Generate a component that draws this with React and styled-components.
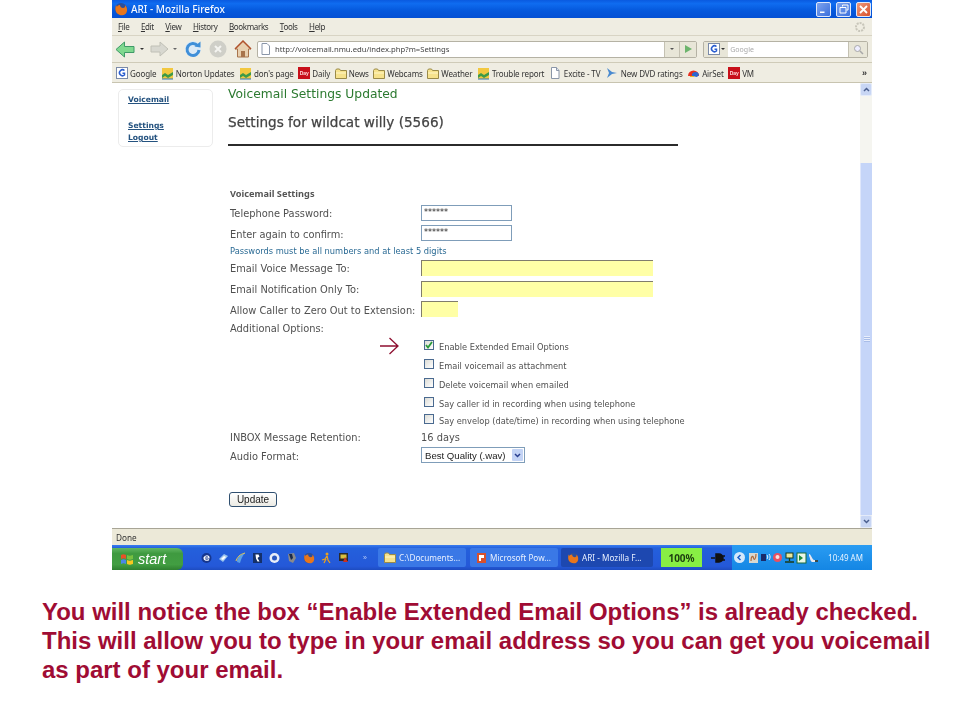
import React from 'react'
import styled, { createGlobalStyle } from 'styled-components'

const GlobalStyle = createGlobalStyle`
  html, body {
    margin: 0;
    padding: 0;
    background: #fff;
  }
`

const Page = styled.div`
  width: 960px;
  height: 720px;
  overflow: hidden;
  background: #fff;
`
const Shot = styled.div`
  width: 760px;
  height: 570px;
  margin-left: 112px;
  display: flex;
  flex-direction: column;
  filter: blur(0.35px);
`

/* title bar */
const TitleBar = styled.div`
  height: 18px;
  display: flex;
  align-items: center;
  padding: 0 1px 0 2px;
  gap: 3px;
  background: linear-gradient(180deg, #0a5ae0 0%, #0f6cf0 20%, #0558dc 60%, #0450d4 100%);
`
const TitleText = styled.span`
  flex: 1;
  font: 500 10px "Noto Sans", "Liberation Sans", sans-serif;
  color: #f4f8ff;
`
const WinButton = styled.div`
  width: 15px;
  height: 15px;
  margin-left: 2px;
  border-radius: 2px;
  border: 1px solid #dfe8fa;
  box-sizing: border-box;
  display: flex;
  align-items: center;
  justify-content: center;
  background: ${p => p.$close
    ? 'linear-gradient(135deg, #ee9a7c, #d8512c)'
    : 'linear-gradient(135deg, #7ea4ee, #3b6fdc)'};
`

/* menu */
const MenuBar = styled.div`
  height: 18px;
  display: flex;
  align-items: center;
  padding: 0 6px;
  gap: 11.5px;
  background: #efede2;
  border-bottom: 1px solid #d8d4c4;
  box-sizing: border-box;
`
const MenuItem = styled.span`
  font: 8px "Noto Sans", "Liberation Sans", sans-serif;
  letter-spacing: -0.35px;
  color: #333;
  &::first-letter {
    text-decoration: underline;
  }
`

/* navigation */
const NavBar = styled.div`
  height: 27px;
  display: flex;
  align-items: center;
  padding-left: 3px;
  padding-right: 4px;
  background: #efede2;
  border-bottom: 1px solid #cfcbb8;
  box-sizing: border-box;
`
const NavIcon = styled.div`
  display: flex;
  margin-right: ${p => p.$gap}px;
`
const Caret = styled.div`
  width: 0;
  height: 0;
  border-left: 2px solid transparent;
  border-right: 2px solid transparent;
  border-top: 2px solid ${p => p.$color || '#333'};
  margin-right: ${p => p.$gap || 0}px;
`
const UrlBar = styled.div`
  width: 441px;
  height: 17px;
  display: flex;
  align-items: center;
  background: #fff;
  border: 1px solid #b5b2a4;
  border-radius: 2px;
  box-sizing: border-box;
  margin-right: 6px;
`
const UrlText = styled.span`
  flex: 1;
  margin-left: 4px;
  font: 7.7px "Noto Sans", "Liberation Sans", sans-serif;
  color: #444;
`
const UrlCell = styled.div`
  width: ${p => p.$w}px;
  height: 100%;
  background: #e8e6d8;
  border-left: 1px solid #c4c1b2;
  box-sizing: border-box;
  display: flex;
  align-items: center;
  justify-content: center;
`
const SearchBar = styled(UrlBar)`
  width: 165px;
  margin-right: 0;
`
const SearchEngine = styled.div`
  width: 24px;
  height: 100%;
  background: #e8e6d8;
  display: flex;
  align-items: center;
  justify-content: center;
  gap: 1px;
`
const SearchText = styled.span`
  flex: 1;
  margin-left: 2px;
  font: 7px "Noto Sans", "Liberation Sans", sans-serif;
  color: #aaa;
`

/* bookmarks */
const Bookmarks = styled.div`
  height: 20px;
  display: flex;
  align-items: center;
  padding: 1px 5px 0 4px;
  gap: 4.5px;
  background: #efede2;
  border-bottom: 1px solid #c8c4b0;
  box-sizing: border-box;
`
const Bookmark = styled.div`
  display: flex;
  align-items: center;
  gap: 2px;
  font: 8px "Noto Sans", "Liberation Sans", sans-serif;
  letter-spacing: -0.12px;
  color: #333;
  white-space: nowrap;
`
const More = styled.span`
  margin-left: auto;
  font: bold 9px "Liberation Sans", sans-serif;
  color: #333;
`
const DayBox = styled.span`
  width: 12px;
  height: 12px;
  background: #c8101a;
  color: #ffd9d9;
  font: bold 5px "Liberation Sans", sans-serif;
  display: flex;
  align-items: center;
  justify-content: center;
`

/* content */
const Viewport = styled.div`
  height: 445px;
  display: flex;
  background: #fff;
`
const Content = styled.div`
  flex: 1;
  display: flex;
  min-width: 0;
`
const Sidebar = styled.nav`
  width: 95px;
  height: 58px;
  margin: 6px 15px 0 6px;
  padding: 4px 9px;
  box-sizing: border-box;
  border: 1px solid #ececec;
  border-radius: 5px;
  display: flex;
  flex-direction: column;
  flex-shrink: 0;
`
const SideLink = styled.a`
  font: bold 7.6px/12px "DejaVu Sans", Verdana, sans-serif;
  color: #24527f;
  text-decoration: underline;
  margin-bottom: ${p => p.$gap || 0}px;
`
const Main = styled.div`
  flex: 1;
  min-width: 0;
`
const Updated = styled.div`
  height: 20px;
  margin-top: 1px;
  font: 12.3px/20px "DejaVu Sans", Verdana, sans-serif;
  color: #2c7a30;
`
const Heading = styled.h2`
  margin: 9px 0 0;
  font: normal 13.6px/18px "DejaVu Sans", Verdana, sans-serif;
  -webkit-text-stroke: 0.25px #444;
  color: #444;
`
const Rule = styled.hr`
  width: 450px;
  height: 2px;
  margin: 13px 0 0;
  border: 0;
  background: #2b2b2b;
`
const Form = styled.div`
  margin: 38px 0 0 2px;
`
const Row = styled.div`
  height: ${p => p.$h}px;
  display: grid;
  grid-template-columns: 191px 1fr;
  align-items: center;
`
const Label = styled.span`
  padding-top: 2px;
  font: 9.85px "DejaVu Sans", Verdana, sans-serif;
  color: #505050;
  white-space: nowrap;
`
const SectionTitle = styled.span`
  font: 700 9.2px "Noto Sans", "Liberation Sans", sans-serif;
  color: #555;
  white-space: nowrap;
`
const Note = styled.span`
  font: 8.3px "DejaVu Sans", Verdana, sans-serif;
  color: #2a6a94;
  white-space: nowrap;
`
const PassInput = styled.div`
  width: 91px;
  height: 16px;
  box-sizing: border-box;
  border: 1px solid #7f9db9;
  padding-left: 2px;
  font: 8px/14px "DejaVu Sans", sans-serif;
  color: #222;
`
const YellowInput = styled.div`
  width: ${p => p.$w}px;
  height: 16px;
  box-sizing: border-box;
  background: #ffffa6;
  border-top: 1px solid #807c6c;
  border-left: 1px solid #807c6c;
`
const ArrowCell = styled.div`
  display: flex;
  justify-content: flex-end;
  padding-right: 22px;
`
const CheckLine = styled.div`
  display: flex;
  align-items: center;
  gap: 5px;
  padding: 2px 0 0 3px;
  font: 8.25px "DejaVu Sans", Verdana, sans-serif;
  color: #505050;
  white-space: nowrap;
`
const CheckBox = styled.span`
  width: 10px;
  height: 10px;
  box-sizing: border-box;
  border: 1px solid #4a6a90;
  background: linear-gradient(135deg, #dcdcd6, #fff);
  display: flex;
  align-items: center;
  justify-content: center;
  margin-top: -4px;
`
const Select = styled.div`
  width: 104px;
  height: 16px;
  box-sizing: border-box;
  border: 1px solid #7f9db9;
  display: flex;
  align-items: center;
  justify-content: space-between;
  padding: 0 1px 0 3px;
  font: 9.6px "Liberation Sans", Arial, sans-serif;
  color: #222;
`
const SelectArrow = styled.span`
  width: 11px;
  height: 12px;
  background: #c3d3f5;
  border-radius: 1px;
  display: flex;
  align-items: center;
  justify-content: center;
`
const Update = styled.button`
  display: block;
  width: 48px;
  height: 15px;
  margin: 27px 0 0 -1px;
  padding: 0;
  background: linear-gradient(180deg, #fff, #ecebe4);
  border: 1px solid #2f4f6f;
  border-radius: 3px;
  font: 10px "Liberation Sans", Arial, sans-serif;
  color: #222;
`

/* scrollbar */
const Scrollbar = styled.div`
  width: 12px;
  display: flex;
  flex-direction: column;
  background: #f5f5f0;
`
const ScrollButton = styled.div`
  height: 13px;
  background: #c8d6f4;
  border: 1px solid #e4ebfa;
  box-sizing: border-box;
  border-radius: 2px;
  display: flex;
  align-items: center;
  justify-content: center;
`
const ScrollGap = styled.div`
  height: 67px;
`
const ScrollThumb = styled.div`
  flex: 1;
  background: #c5d5f8;
  border-left: 1px solid #dfe7fb;
  display: flex;
  align-items: center;
  justify-content: center;
`
const Grip = styled.div`
  width: 6px;
  height: 6px;
  background: repeating-linear-gradient(180deg, #e8eefc 0 1px, #a9bde8 1px 2px);
`

/* status + taskbar */
const StatusBar = styled.div`
  height: 17px;
  display: flex;
  align-items: center;
  padding-left: 4px;
  background: #ece9d8;
  border-top: 1px solid #a8a596;
  box-sizing: border-box;
  font: 8.2px "Noto Sans", "Liberation Sans", sans-serif;
  color: #333;
`
const Taskbar = styled.div`
  height: 25px;
  display: flex;
  align-items: center;
  background: linear-gradient(180deg, #3a7df0 0%, #2460dc 12%, #2458d8 85%, #1e4cc0 100%);
`
const StartButton = styled.div`
  width: 71px;
  height: 22px;
  margin-top: 3px;
  display: flex;
  align-items: center;
  gap: 4px;
  padding-left: 8px;
  box-sizing: border-box;
  border-radius: 0 6px 6px 0;
  background: linear-gradient(180deg, #62b662 0%, #3f9a40 25%, #429e42 75%, #2f8030 100%);
  font: italic 500 14.5px "Liberation Sans", Arial, sans-serif;
  color: #fff;
`
const QuickLaunch = styled.div`
  display: flex;
  align-items: center;
  gap: 6px;
  margin-left: 18px;
  width: 177px;
  flex-shrink: 0;
`
const QuickMore = styled.span`
  margin-left: 8px;
  font: 7px "Liberation Sans", sans-serif;
  color: #b8ccf8;
`
const Task = styled.div`
  width: ${p => p.$w}px;
  height: 19px;
  margin-right: ${p => p.$gap}px;
  display: flex;
  align-items: center;
  gap: 3px;
  padding-left: 6px;
  box-sizing: border-box;
  border-radius: 2px;
  background: ${p => p.$active ? '#1d48b0' : '#3a78e6'};
  font: 8.2px "Noto Sans", "Liberation Sans", sans-serif;
  color: #e8f0ff;
  white-space: nowrap;
  overflow: hidden;
  flex-shrink: 0;
`
const Battery = styled.div`
  width: 41px;
  height: 19px;
  margin: 0 0 0 8px;
  display: flex;
  align-items: center;
  justify-content: center;
  background: #88ee44;
  font: bold 10px "Noto Sans", "Liberation Sans", sans-serif;
  color: #1d3d10;
  flex-shrink: 0;
`
const Plug = styled.div`
  display: flex;
  margin-left: 9px;
  margin-right: 7px;
`
const Tray = styled.div`
  flex: 1;
  height: 100%;
  display: flex;
  align-items: center;
  background: linear-gradient(180deg, #2a9cf2, #1486e4);
  padding-left: 2px;
  gap: 1px;
`
const TrayChevron = styled.div`
  width: 11px;
  height: 11px;
  border-radius: 50%;
  background: #d4e8fb;
  margin-right: 2px;
  display: flex;
  align-items: center;
  justify-content: center;
`
const Clock = styled.span`
  margin-left: auto;
  margin-right: 9px;
  font: 8px "Noto Sans", "Liberation Sans", sans-serif;
  color: #e8f4ff;
`

/* caption */
const Caption = styled.p`
  margin: 27px 0 0 42px;
  font: bold 23.97px/29px "Liberation Sans", Arial, sans-serif;
  color: #a00c34;
  white-space: nowrap;
`

/* drawings */
const Fox = ({ size = 13 }) => (
  <svg width={size} height={size} viewBox="0 0 14 14">
    <circle cx="7" cy="7" r="6" fill="#2c4f9c" />
    <path d="M2 3c-1 3-1 7 2 9s8 2 9-3c.5-3-1-5-2-6 .5 2-.5 3-2 3S6 5 6 3C4 3 3 4 3 5 2.500 4.500 2.500 3.500 2 3z" fill="#e8761c" />
  </svg>
)
const Folder = () => (
  <svg width="12" height="11" viewBox="0 0 12 11">
    <path d="M.5 2.500 1.500 1h3l1 1.500h6v8H.5z" fill="#f6e28c" stroke="#9a8a48" />
    <path d="M1 5h10" stroke="#fff6c8" />
  </svg>
)
const Sheet = () => (
  <svg width="13" height="12" viewBox="0 0 13 12">
    <path d="M2.500.5h5l2.500 3v8h-7.500z" fill="#fff" stroke="#8a96a8" />
    <path d="M7.500.5v3h2.500" fill="#dde4ee" stroke="#8a96a8" />
  </svg>
)
const Norton = () => (
  <svg width="13" height="13" viewBox="0 0 13 13">
    <rect x="1" y="1" width="11" height="11" fill="#f2c840" />
    <path d="M1 8 4 6l3 2 5-3v3l-5 3-3-2-3 2z" fill="#3c9a48" />
    <path d="M1 12h11" stroke="#2a78b8" />
  </svg>
)
const GoogleIcon = () => (
  <svg width="12" height="12" viewBox="0 0 12 12">
    <rect x=".5" y=".5" width="11" height="11" fill="#fff" stroke="#7a8aa8" />
    <path d="M8.500 3.500A3 3 0 1 0 8.500 8V6.200H6.500" fill="none" stroke="#2a5ed0" strokeWidth="1.500" />
  </svg>
)
const Globe = () => (
  <svg width="14" height="12" viewBox="0 0 14 12">
    <path d="M2 1 7 5 12 6 7 7 2 11 4 6z" fill="#4a8ad0" />
  </svg>
)
const AirSet = () => (
  <svg width="13" height="11" viewBox="0 0 13 11">
    <path d="M1 8a5.500 5.500 0 0 1 11 0z" fill="#e83020" />
    <path d="M5 8a3 3 0 0 1 7-1l-2 2z" fill="#2a68d0" />
    <path d="M3 8h4v1H3z" fill="#f0b820" />
  </svg>
)
const Back = () => (
  <svg width="20" height="17" viewBox="0 0 20 17">
    <path d="M1 8.500 9.500 1v4.500H19v6H9.500V16z" fill="#7fd88f" stroke="#3f9a68" />
  </svg>
)
const Forward = () => (
  <svg width="19" height="16" viewBox="0 0 19 16">
    <path d="M18 8 10 1v4H1v6h9v4z" fill="#d8d8d0" stroke="#c0c0b6" />
  </svg>
)
const Reload = () => (
  <svg width="18" height="18" viewBox="0 0 18 18">
    <circle cx="9" cy="9" r="8" fill="#dceaf6" />
    <path d="M13.500 5.500A6 6 0 1 0 15 10" fill="none" stroke="#3f8fd8" strokeWidth="3" />
    <path d="M10.500 6.500 16.500 1.500V7.500z" fill="#3f8fd8" />
  </svg>
)
const Stop = () => (
  <svg width="18" height="18" viewBox="0 0 18 18">
    <circle cx="9" cy="9" r="8.500" fill="#cfcfc8" />
    <path d="M6 6l6 6M12 6l-6 6" stroke="#f4f4f0" strokeWidth="2" />
  </svg>
)
const Home = () => (
  <svg width="18" height="18" viewBox="0 0 18 18">
    <path d="M9 1 1 9h2.500v8h11V9H17z" fill="#e8d0b0" stroke="#a8744c" />
    <path d="M1 9 9 1l8 8" fill="none" stroke="#b0522c" strokeWidth="1.500" />
    <rect x="7" y="11" width="4" height="6" fill="#a8744c" />
  </svg>
)
const Gear = () => (
  <svg width="12" height="12" viewBox="0 0 12 12" style={{ marginLeft: 'auto' }}>
    <circle cx="6" cy="6" r="4" fill="none" stroke="#c8c6ba" strokeWidth="2" strokeDasharray="2 1" />
  </svg>
)
const WinFlag = () => (
  <svg width="14" height="13" viewBox="0 0 14 13">
    <path d="M1 2c2-1 3-1 5 0v4C4 5 3 5 1 6z" fill="#e85028" />
    <path d="M7 2c2 1 3 1 6 0v4c-3 1-4 1-6 0z" fill="#78c040" />
    <path d="M1 7c2-1 3-1 5 0v4C4 10 3 10 1 11z" fill="#4a88e8" />
    <path d="M7 7c2 1 3 1 6 0v4c-3 1-4 1-6 0z" fill="#f8c820" />
  </svg>
)
const Chevron = ({ up, left, color = '#4a5f8f' }) => (
  <svg width="7" height="7" viewBox="0 0 7 7">
    <path
      d={left ? 'M4.500 1 2 3.500 4.500 6' : up ? 'M1 5l2.500-2.500L6 5' : 'M1 2l2.500 2.500L6 2'}
      fill="none"
      stroke={color}
      strokeWidth="1.500"
    />
  </svg>
)
const Tick = () => (
  <svg width="8" height="8" viewBox="0 0 8 8">
    <path d="M1 4l2 2.500L7 1" fill="none" stroke="#2a9a3a" strokeWidth="1.800" />
  </svg>
)
const RedArrow = () => (
  <svg width="19" height="18" viewBox="0 0 19 18">
    <path d="M0 9h18M9.500 1l8.500 8-8.500 8" fill="none" stroke="#8e0f30" strokeWidth="1.300" />
  </svg>
)

/* quick launch and tray glyphs, all 11x12 */
const Mini = ({ children }) => (
  <svg width="11" height="12" viewBox="0 0 11 12">{children}</svg>
)
const quickIcons = [
  <Mini><circle cx="5.500" cy="6" r="5" fill="#16368e" /><path d="M3 6c1-3 5-3 5 0H3c0 2 3 3 5 1.500" fill="none" stroke="#fff" strokeWidth="1.200" /></Mini>,
  <Mini><path d="M1 7l5-5 4 2-5 6z" fill="#9cc4ec" /><path d="M3 7l3-3 2 1-3 3z" fill="#fff" /></Mini>,
  <Mini><path d="M2 10C2 5 6 2 10 1 7 4 6 8 5 11z" fill="#5aa0e8" /><path d="M1 9c2-6 6-7 9-8" fill="none" stroke="#e8c850" /></Mini>,
  <Mini><rect x="1" y="1" width="9" height="10" fill="#14306a" /><path d="M3.500 2.500h3l1 2-2 1.500 2 3.500H5.500L4 6.500z" fill="#fff" /></Mini>,
  <Mini><circle cx="5.500" cy="6" r="5" fill="#e8eef8" /><circle cx="5.500" cy="6" r="2.500" fill="#2a58c0" /></Mini>,
  <Mini><path d="M2 2l6-1 2 5-3 5-4-2z" fill="#8a8a8a" /><path d="M3 2l3 0 1 4-2 2z" fill="#1a2a4a" /></Mini>,
  <Fox size={12} />,
  <Mini><circle cx="6" cy="2" r="1.500" fill="#e8a020" /><path d="M6 4 4 7 1 8M6 4l1 4 2 3M5 7l-2 4" stroke="#e8a020" strokeWidth="1.300" fill="none" /></Mini>,
  <Mini><rect x="1" y="1" width="9" height="8" fill="#2a2a2a" /><rect x="2.500" y="2.500" width="6" height="4" fill="#d8c040" /><path d="M7 5l3 5H5z" fill="#c83020" /></Mini>,
]
const trayIcons = [
  <Mini><rect x="1" y="1" width="9" height="10" fill="#d8d8d0" /><path d="M3 9c0-5 2-6 2.500-3S8 7 8 2" fill="none" stroke="#b06a3a" strokeWidth="1.200" /></Mini>,
  <Mini><rect x="1" y="2" width="5" height="7" fill="#1a2a6a" /><path d="M7 3c1 1 1 3 0 4M9 2c1.500 2 1.500 4 0 6" fill="none" stroke="#e8f0ff" /></Mini>,
  <Mini><circle cx="5.500" cy="5.500" r="4.500" fill="#e85060" /><circle cx="5.500" cy="5" r="2" fill="#f8e0e0" /></Mini>,
  <Mini><rect x="2" y="1" width="7" height="5" fill="#e8e8a0" stroke="#1a3a1a" /><path d="M5.500 6v3M1 10h9" stroke="#1a3a1a" strokeWidth="1.300" /></Mini>,
  <Mini><rect x="1" y="1" width="9" height="10" fill="#e8f8e8" stroke="#1a6a3a" /><path d="M3 3l4 3-4 3z" fill="#1a8a3a" /></Mini>,
  <Mini><path d="M1 2c2 0 3 5 5 6h4v2H4C2 9 2 5 1 4z" fill="#e8e8f0" /><path d="M7 8h3v2H7z" fill="#3a4a4a" /></Mini>,
]

const bookmarks = [
  [<GoogleIcon />, 'Google'],
  [<Norton />, 'Norton Updates'],
  [<Norton />, "don's page"],
  [<DayBox>Day</DayBox>, 'Daily'],
  [<Folder />, 'News'],
  [<Folder />, 'Webcams'],
  [<Folder />, 'Weather'],
  [<Norton />, 'Trouble report'],
  [<Sheet />, 'Excite - TV'],
  [<Globe />, 'New DVD ratings'],
  [<AirSet />, 'AirSet'],
  [<DayBox>Day</DayBox>, 'VM'],
]

const options = [
  ['Enable Extended Email Options', true, 19],
  ['Email voicemail as attachment', false, 19],
  ['Delete voicemail when emailed', false, 19],
  ['Say caller id in recording when using telephone', false, 19],
  ['Say envelop (date/time) in recording when using telephone', false, 16],
]

export default function App() {
  return (
    <Page>
      <GlobalStyle />
      <Shot>
        <TitleBar>
          <Fox size={14} />
          <TitleText>ARI - Mozilla Firefox</TitleText>
          <WinButton>
            <svg width="9" height="9" viewBox="0 0 9 9"><path d="M1 6.500h4.500v1.500H1z" fill="#fff" /></svg>
          </WinButton>
          <WinButton>
            <svg width="10" height="10" viewBox="0 0 10 10">
              <path d="M3.500 2.500V1h5.500v5H7.500M1 3.500h6v5.500H1z" fill="none" stroke="#fff" />
            </svg>
          </WinButton>
          <WinButton $close>
            <svg width="9" height="9" viewBox="0 0 9 9"><path d="M1 1l7 7M8 1 1 8" stroke="#fff" strokeWidth="1.800" /></svg>
          </WinButton>
        </TitleBar>

        <MenuBar>
          {['File', 'Edit', 'View', 'History', 'Bookmarks', 'Tools', 'Help'].map(m => (
            <MenuItem key={m}>{m}</MenuItem>
          ))}
          <Gear />
        </MenuBar>

        <NavBar>
          <NavIcon $gap={5}><Back /></NavIcon>
          <Caret $gap={6} />
          <NavIcon $gap={4}><Forward /></NavIcon>
          <Caret $gap={7} $color="#666" />
          <NavIcon $gap={7}><Reload /></NavIcon>
          <NavIcon $gap={7}><Stop /></NavIcon>
          <NavIcon $gap={5}><Home /></NavIcon>
          <UrlBar>
            <svg width="10" height="12" viewBox="0 0 10 12" style={{ marginLeft: 3 }}>
              <path d="M1 .5h5l2.500 2.500v8.500H1z" fill="#fff" stroke="#8a96a8" />
            </svg>
            <UrlText>http://voicemail.nmu.edu/index.php?m=Settings</UrlText>
            <UrlCell $w={15}><Caret $color="#555" /></UrlCell>
            <UrlCell $w={17}>
              <svg width="9" height="10" viewBox="0 0 9 10"><path d="M1 1l7 4-7 4z" fill="#6cb46c" /></svg>
            </UrlCell>
          </UrlBar>
          <SearchBar>
            <SearchEngine>
              <GoogleIcon />
              <Caret />
            </SearchEngine>
            <SearchText>Google</SearchText>
            <UrlCell $w={19}>
              <svg width="11" height="11" viewBox="0 0 11 11">
                <circle cx="4.500" cy="4.500" r="3" fill="#eef" stroke="#a8a8a8" />
                <path d="M7 7l3 3" stroke="#a8a8a8" strokeWidth="1.500" />
              </svg>
            </UrlCell>
          </SearchBar>
        </NavBar>

        <Bookmarks>
          {bookmarks.map(([icon, name]) => (
            <Bookmark key={name}>{icon}{name}</Bookmark>
          ))}
          <More>»</More>
        </Bookmarks>

        <Viewport>
          <Content>
            <Sidebar>
              <SideLink $gap={14}>Voicemail</SideLink>
              <SideLink>Settings</SideLink>
              <SideLink>Logout</SideLink>
            </Sidebar>
            <Main>
              <Updated>Voicemail Settings Updated</Updated>
              <Heading>Settings for wildcat willy (5566)</Heading>
              <Rule />
              <Form>
                <Row $h={19}><SectionTitle>Voicemail Settings</SectionTitle></Row>
                <Row $h={19}><Label>Telephone Password:</Label><PassInput>******</PassInput></Row>
                <Row $h={22}><Label>Enter again to confirm:</Label><PassInput>******</PassInput></Row>
                <Row $h={13}><Note>Passwords must be all numbers and at least 5 digits</Note></Row>
                <Row $h={21}><Label>Email Voice Message To:</Label><YellowInput $w={232} /></Row>
                <Row $h={21}><Label>Email Notification Only To:</Label><YellowInput $w={232} /></Row>
                <Row $h={20}><Label>Allow Caller to Zero Out to Extension:</Label><YellowInput $w={37} /></Row>
                <Row $h={17}><Label>Additional Options:</Label></Row>
                {options.map(([text, checked, h]) => (
                  <Row key={text} $h={h}>
                    <ArrowCell>{checked && <RedArrow />}</ArrowCell>
                    <CheckLine>
                      <CheckBox>{checked && <Tick />}</CheckBox>
                      {text}
                    </CheckLine>
                  </Row>
                ))}
                <Row $h={17}><Label>INBOX Message Retention:</Label><Label>16 days</Label></Row>
                <Row $h={20}>
                  <Label>Audio Format:</Label>
                  <Select>
                    Best Quality (.wav)
                    <SelectArrow><Chevron color="#2a3f8f" /></SelectArrow>
                  </Select>
                </Row>
                <Update type="button">Update</Update>
              </Form>
            </Main>
          </Content>
          <Scrollbar>
            <ScrollButton><Chevron up /></ScrollButton>
            <ScrollGap />
            <ScrollThumb><Grip /></ScrollThumb>
            <ScrollButton><Chevron /></ScrollButton>
          </Scrollbar>
        </Viewport>

        <StatusBar>Done</StatusBar>

        <Taskbar>
          <StartButton><WinFlag />start</StartButton>
          <QuickLaunch>
            {quickIcons.map((icon, i) => <React.Fragment key={i}>{icon}</React.Fragment>)}
            <QuickMore>»</QuickMore>
          </QuickLaunch>
          <Task $w={88} $gap={4}><Folder />C:\Documents...</Task>
          <Task $w={88} $gap={3}>
            <svg width="11" height="12" viewBox="0 0 11 12">
              <rect x="1" y="1" width="9" height="10" fill="#d8502c" />
              <path d="M3 3h5v3H5v3H3z" fill="#fff" />
            </svg>
            Microsoft Pow...
          </Task>
          <Task $w={92} $gap={0} $active><Fox size={12} />ARI - Mozilla F...</Task>
          <Battery>100%</Battery>
          <Plug>
            <svg width="14" height="10" viewBox="0 0 14 10">
              <path d="M0 5h4M5 1h3a4 4 0 0 1 0 8H5zM11 3h3M11 7h3" stroke="#111" strokeWidth="1.500" fill="#111" />
            </svg>
          </Plug>
          <Tray>
            <TrayChevron><Chevron left color="#1a5cc8" /></TrayChevron>
            {trayIcons.map((icon, i) => <React.Fragment key={i}>{icon}</React.Fragment>)}
            <Clock>10:49 AM</Clock>
          </Tray>
        </Taskbar>
      </Shot>

      <Caption>
        You will notice the box “Enable Extended Email Options” is already checked.<br />
        This will allow you to type in your email address so you can get you voicemail<br />
        as part of your email.
      </Caption>
    </Page>
  )
}
